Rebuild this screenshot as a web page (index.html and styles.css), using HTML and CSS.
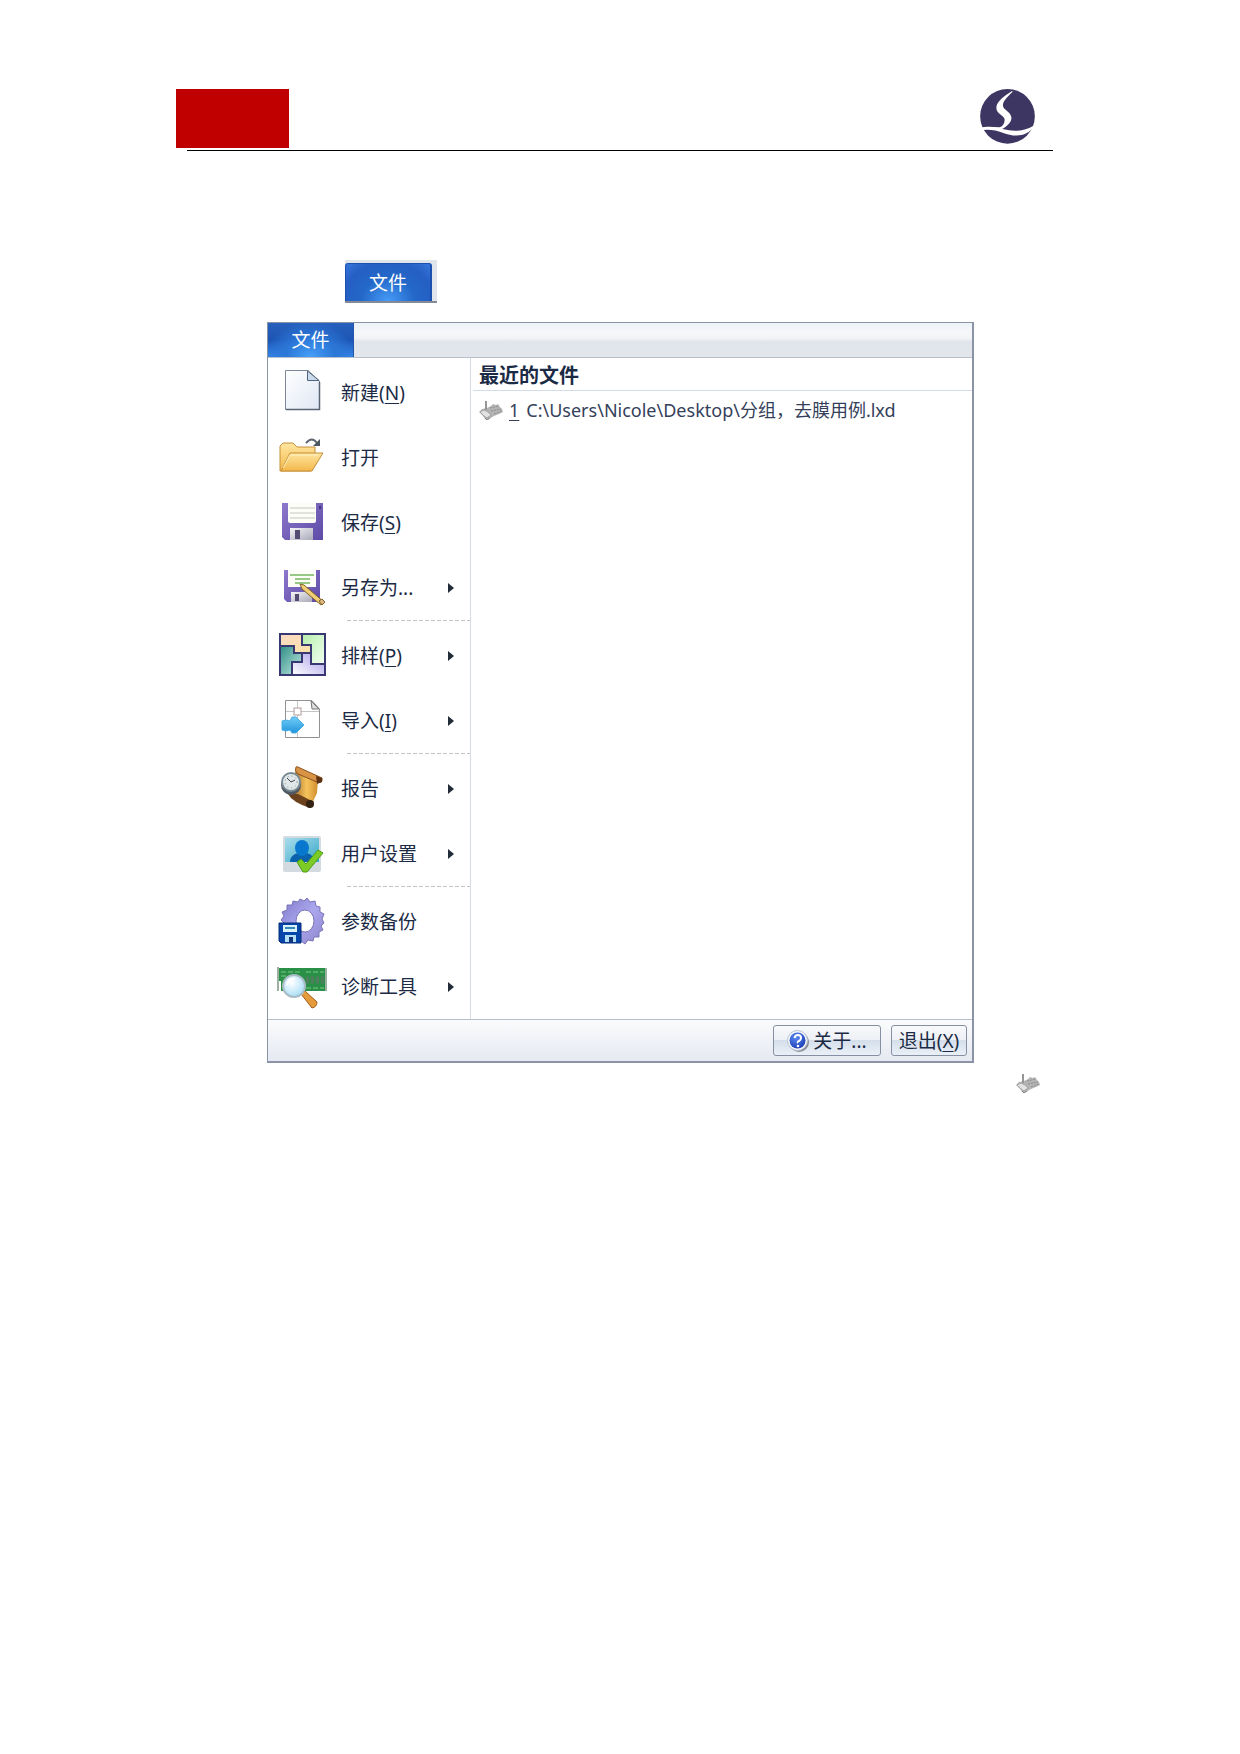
FILE: index.html
```html
<!DOCTYPE html>
<html lang="zh-CN">
<head>
<meta charset="utf-8">
<meta name="viewport" content="width=device-width, initial-scale=1">
<title>文件</title>
<link rel="stylesheet" href="styles.css">
</head>
<body>
<svg class="defs" aria-hidden="true">
  <defs>
    <linearGradient id="paper" x1="0" y1="0" x2="1" y2="1"><stop offset="0" stop-color="#fff"/><stop offset="1" stop-color="#dfe6f4"/></linearGradient>
    <linearGradient id="folder" x1="0" y1="0" x2="0" y2="1"><stop offset="0" stop-color="#ffe6a0"/><stop offset="1" stop-color="#f3b84b"/></linearGradient>
    <linearGradient id="violet" x1="0" y1="0" x2="1" y2="1"><stop offset="0" stop-color="#8d78cc"/><stop offset="1" stop-color="#5d4aa6"/></linearGradient>
    <linearGradient id="metal" x1="0" y1="0" x2="1" y2="1"><stop offset="0" stop-color="#f4f4f8"/><stop offset="1" stop-color="#a9a9b8"/></linearGradient>
    <linearGradient id="teal" x1="0" y1="0" x2="1" y2="1"><stop offset="0" stop-color="#2c8c84"/><stop offset="1" stop-color="#c4ece4"/></linearGradient>
    <linearGradient id="peach" x1="0" y1="0" x2="1" y2="1"><stop offset="0" stop-color="#fbd9c4"/><stop offset="1" stop-color="#fbe3a8"/></linearGradient>
    <linearGradient id="mint" x1="0" y1="0" x2="1" y2="1"><stop offset="0" stop-color="#b4eeac"/><stop offset="1" stop-color="#f4fff0"/></linearGradient>
    <linearGradient id="lilac" x1="0" y1="1" x2="1" y2="0"><stop offset="0" stop-color="#fff"/><stop offset="1" stop-color="#a89ce8"/></linearGradient>
    <linearGradient id="arrowblue" x1="0" y1="0" x2="0" y2="1"><stop offset="0" stop-color="#6fcdf8"/><stop offset="1" stop-color="#2394dc"/></linearGradient>
    <linearGradient id="scroll" x1="0" y1="0" x2="1" y2="0"><stop offset="0" stop-color="#94591c"/><stop offset=".6" stop-color="#f6c45c"/><stop offset="1" stop-color="#d08c2c"/></linearGradient>
    <linearGradient id="sky" x1="0" y1="0" x2="1" y2="1"><stop offset="0" stop-color="#a8dcec"/><stop offset="1" stop-color="#38a8c8"/></linearGradient>
    <linearGradient id="gear" x1="0" y1="0" x2="1" y2="1"><stop offset="0" stop-color="#7c78c8"/><stop offset=".5" stop-color="#aca8ee"/><stop offset="1" stop-color="#8c84cc"/></linearGradient>
    <radialGradient id="lens" cx=".4" cy=".35" r=".7"><stop offset="0" stop-color="#fff"/><stop offset="1" stop-color="#a4dcf6"/></radialGradient>
    <radialGradient id="help" cx=".4" cy=".3" r=".8"><stop offset="0" stop-color="#5c8cf4"/><stop offset="1" stop-color="#1838b0"/></radialGradient>
    <symbol id="part" viewBox="0 0 24 20">
      <path d="M8 8 12 6 14 4 17 5 19 4 21 7 23 9 24 12 20 14 15 16 10 19 7 20 4 16 0 12 3 9Z" fill="#b4b4b4"/>
      <path d="M1 12 5 10 9 12 12 15 8 18 5 16Z" fill="#e2e2e2" stroke="#a4a4a4"/>
      <path d="M11 8 20 6M12 11 22 9M15 14 23 11" stroke="#8e8e8e" stroke-dasharray="2 1"/>
      <path d="M7 1V10" fill="none" stroke="#959595" stroke-width="2"/>
      <path d="m6 18 2 2 3-2" fill="none" stroke="#858585"/>
    </symbol>
  </defs>
</svg>

<header class="page-header">
  <div class="red-block"></div>
  <svg class="logo" viewBox="117 57 165 163" role="img" aria-label="logo">
    <circle cx="199.500" cy="138" r="82" fill="#3d3562"/>
    <path d="M213 62C190 77 167 93 166 112C165 131 192 136 191 149C190 162 182 170 175 171C157 170 140 167 117 172V180C143 176 164 179 185 187C207 195 225 198 245 193C263 187 276 176 278 166C253 180 227 184 205 180L184 176C202 165 213 153 211 140C208 124 188 119 186 107C184 95 196 82 215 64Z" fill="#fff"/>
  </svg>
</header>

<main class="content">
  <div class="tab-sample"><button class="file-button" type="button">文件</button></div>

  <section class="app-menu">
    <div class="title-bar"><button class="tab" type="button">文件</button></div>
    <div class="panes">
      <nav class="commands">
        <button class="command" type="button">
          <svg class="icon" viewBox="0 0 48 48"><path d="M7.500 1.500H30L41.500 12V40.500H7.500Z" fill="url(#paper)" stroke="#7c8798"/><path d="M41.500 13V40.500H8" fill="none" stroke="#596475" stroke-width="1.500"/><path d="M29.500 2V11.500H41Z" fill="#c9daea" stroke="#52657c"/></svg>
          <span>新建(<u>N</u>)</span>
        </button>
        <button class="command" type="button">
          <svg class="icon" viewBox="0 0 48 48"><path d="M2 37V12l3-3H15l4 4H37V18L33 37Z" fill="url(#folder)" stroke="#c58f39"/><path d="M3 37 12 19H45L34 37Z" fill="url(#folder)" stroke="#c58f39"/><path d="M5 34 12 21H40" fill="none" stroke="#fff0bd"/><path d="M28 9Q34 2 39 9" fill="none" stroke="#5e6670" stroke-width="2"/><path d="M42 5V12H35Z" fill="#4d5761"/></svg>
          <span>打开</span>
        </button>
        <button class="command" type="button">
          <svg class="icon" viewBox="0 0 48 48"><path d="M4 4H45V41H7L4 38Z" fill="url(#violet)"/><path d="M10 4H38V22Q38 24 36 24H12Q10 24 10 22Z" fill="#fdfdf7"/><path d="M12 9H37M12 14H37M12 19H37" stroke="#c4c9bb"/><path d="M12 29H35V41H12Z" fill="url(#metal)"/><path d="M17 31H22V40H17Z" fill="#554c73"/><path d="M41 7h2v3h-2Z" fill="#44357f"/></svg>
          <span>保存(<u>S</u>)</span>
        </button>
        <button class="command" type="button">
          <svg class="icon" viewBox="0 0 48 48"><path d="M6 6H42V38H9L6 35Z" fill="url(#violet)"/><path d="M10 6H38V23H10Z" fill="#fdfdf7"/><path d="M12 11H36M17 15H32M17 19H32" stroke="#75b662" stroke-width="1.500"/><path d="M13 28H34V38H13Z" fill="url(#metal)"/><path d="M17 30H21V37H17Z" fill="#554c73"/><path d="M22 20 26 21 46 38 43 41 24 25Z" fill="#f0ce72" stroke="#81622c"/><path d="m41 37 3-2 3 3-3 3Z" fill="#dbb981" stroke="#81622c"/></svg>
          <span>另存为...</span><i class="arrow"></i>
        </button>
        <hr class="separator">
        <button class="command" type="button">
          <svg class="icon" viewBox="0 0 48 48"><path d="M2 2H24V13H33V21H14V14H2Z" fill="url(#peach)"/><path d="M24 2H47V32H33V13H24Z" fill="url(#mint)"/><path d="M2 14H16V21H24V30H14V43H2Z" fill="url(#teal)"/><path d="M24 21H33V32H47V43H14V30H24Z" fill="url(#lilac)"/><path d="M2 2H47V43H2ZM24 2V13H33V32H47M2 14H16V21H33M24 21V30H14V43" fill="none" stroke="#3a3872" stroke-width="2"/></svg>
          <span>排样(<u>P</u>)</span><i class="arrow"></i>
        </button>
        <button class="command" type="button">
          <svg class="icon" viewBox="0 0 48 48"><path d="M7.500 3.500H34L41.500 12V40.500H7.500Z" fill="#fff" stroke="#929292"/><path d="M33 4 34 12H41Z" fill="#ddd" stroke="#777"/><path d="M8 14.500H41M19.500 4V40" stroke="#c4c4c4"/><rect x="16" y="11" width="7" height="7" fill="#fff" stroke="#b09c9c"/><path d="M4 24 8 23 12 24 14 20H18L26 28 18 36H14L12 33 8 34 4 33Z" fill="url(#arrowblue)" stroke="#4aaee2"/></svg>
          <span>导入(<u>I</u>)</span><i class="arrow"></i>
        </button>
        <hr class="separator">
        <button class="command" type="button">
          <svg class="icon" viewBox="0 0 48 48"><path d="M18 4 40 14 39 28 33 41 12 29Z" fill="url(#scroll)"/><path d="M18 2Q16 6 20 9L39 17Q45 19 44 13L22 3Q19 1 18 2Z" fill="#d99345" stroke="#8b5320"/><path d="M38 11 44 13V17L39 19Z" fill="#5c3215"/><path d="M10 29Q14 37 32 43L36 37 20 29Z" fill="#6c411e"/><circle cx="32" cy="39" r="4" fill="#322213"/><circle cx="13" cy="20" r="10" fill="#505961"/><circle cx="13" cy="17" r="9" fill="#e1e8e9" stroke="#798994" stroke-width="2"/><path d="m9 13 4 4 4-2" fill="none" stroke="#444"/><circle cx="13" cy="17" r="6" fill="none" stroke="#7d898e" stroke-dasharray="1 3"/></svg>
          <span>报告</span><i class="arrow"></i>
        </button>
        <button class="command" type="button">
          <svg class="icon" viewBox="0 0 48 48"><rect x="5" y="6" width="38" height="36" rx="2" fill="#d3dbe0"/><path d="M7 8H41V32H7Z" fill="url(#sky)"/><path d="M12 32Q12 25 20 23H29Q36 25 36 32Z" fill="#0b62ac"/><ellipse cx="24" cy="18" rx="7" ry="8" fill="#0878ce"/><path d="m19 32 4-3 5 5L40 20 45 23 29 42H25Z" fill="#7dcc25" stroke="#4c9d18"/></svg>
          <span>用户设置</span><i class="arrow"></i>
        </button>
        <hr class="separator">
        <button class="command" type="button">
          <svg class="icon" viewBox="0 0 48 48"><path fill-rule="evenodd" d="M20 4 22 1 26 3 29 0 32 4 37 3 38 8 42 9 42 14 46 16 44 21 46 25 43 28 45 32 41 34 41 39 36 39 35 43 30 42 27 46 23 43 18 44 16 39 11 38 10 33 5 31 7 26 3 22 6 18 4 14 9 12 9 7 14 7 15 3ZM27 12A9 11 0 1 0 27 34 9 11 0 1 0 27 12Z" fill="url(#gear)" stroke="#7a74b8"/><path d="M1 25H23V45H3L1 43Z" fill="#0645aa" stroke="#062d76"/><path d="M5 27H19V34H5Z" fill="#d9f2fa"/><path d="M7 30H17" stroke="#3489ba" stroke-width="2"/><path d="M7 37H18V44H7Z" fill="#b3dff4"/><path d="M11 39h4v5h-4Z" fill="#123377"/></svg>
          <span>参数备份</span>
        </button>
        <button class="command" type="button">
          <svg class="icon" viewBox="0 0 48 48"><path d="M-1 5H49V28H3V18H-1Z" fill="#2a9048"/><path d="M0 4V28M48 5V28" stroke="#9bb0a1" stroke-width="2"/><path d="M3 9H24M28 9H46M3 13H14M28 25H46" stroke="#79c883" stroke-dasharray="5 2"/><path d="M28 17H46" stroke="#4f7f5c" stroke-width="7" stroke-dasharray="3 2"/><path d="m23 31 4-3L39 39Q39 44 34 45Z" fill="#e59a3b" stroke="#a45d1e"/><circle cx="16" cy="23" r="11" fill="url(#lens)" stroke="#a9bcc6" stroke-width="2"/><path d="M9 22Q11 15 17 16" fill="none" stroke="#fff" stroke-width="2"/></svg>
          <span>诊断工具</span><i class="arrow"></i>
        </button>
      </nav>
      <section class="recent">
        <h2 class="recent-title">最近的文件</h2>
        <a class="recent-file" href="#"><svg class="part-icon"><use href="#part"/></svg><u>1</u><span>C:\Users\Nicole\Desktop\分组，去膜用例.lxd</span></a>
      </section>
    </div>
    <footer class="actions">
      <button class="action about" type="button"><svg class="help-icon" viewBox="0 0 22 22"><circle cx="12" cy="12" r="10" fill="#858b94"/><circle cx="10.500" cy="10.500" r="10" fill="#f4f6fa" stroke="#b8c4d4"/><circle cx="10.500" cy="10.500" r="8" fill="url(#help)"/><path d="M7.500 8Q8 5 11 5T14 8Q14 10 12 11T11 13" fill="none" stroke="#fff" stroke-width="2"/><circle cx="11" cy="16" r="1.300" fill="#fff"/></svg>关于...</button>
      <button class="action" type="button">退出(<u>X</u>)</button>
    </footer>
  </section>
</main>
<div class="note"><svg class="part-icon"><use href="#part"/></svg></div>
</body>
</html>
```
FILE: styles.css
```css
* {
  box-sizing: border-box;
}

body {
  margin: 0;
  background: #fff;
  color: #1c2b45;
  font: 19px/24px "Noto Sans", "Noto Sans CJK SC", sans-serif;
}

button {
  margin: 0;
  padding: 0;
  border: 0;
  background: none;
  color: inherit;
  font: inherit;
}

u {
  text-decoration-thickness: 1px;
  text-underline-offset: 3px;
}

.defs {
  position: absolute;
  width: 0;
  height: 0;
}

.page-header {
  display: flex;
  justify-content: space-between;
  margin: 89px 187px 0;
  padding-right: 18px;
  border-bottom: 1px solid #000;
}

.red-block {
  width: 113px;
  height: 59px;
  margin: 0 0 2px -11px;
  background: #c00000;
}

.logo {
  width: 55px;
  height: 55px;
}

.content {
  margin: 109px 266px 0 267px;
}

.tab-sample {
  width: 92px;
  margin-left: 78px;
  padding: 3px 5px 0 0;
  border-bottom: 2px solid #858b94;
  background: #dfe5eb;
}

.file-button,
.tab {
  display: block;
  width: 87px;
  color: #fff;
}

.file-button {
  height: 38px;
  border: 1px solid #1c50ae;
  border-width: 1px 2px 0 1px;
  border-radius: 3px 3px 0 0;
  background: radial-gradient(ellipse at bottom, #479bf8 0, #2368c8 45%, #255fc4 75%, #3676dc 100%);
}

.app-menu {
  margin-top: 19px;
  border: 1px solid #8b94a7;
  border-right-width: 2px;
  border-bottom-width: 2px;
  background: #fff;
}

.title-bar {
  border-bottom: 1px solid #b7bfca;
  background: linear-gradient(#edf3fa 0, #f6f7f8 30%, #f1f3f5 45%, #e0e5ec 55%, #e3e7ec 100%);
}

.tab {
  width: 86px;
  height: 34px;
  border-right: 1px solid #2455a8;
  background: radial-gradient(ellipse at bottom, #46a0f8 0, #2c78d8 40%, transparent 75%), linear-gradient(#2860bc, #1c55b4 50%, #3486e8);
}

.panes {
  display: grid;
  grid-template-columns: 203px 1fr;
}

.commands {
  padding-top: 2px;
  border-right: 1px solid #d7dce4;
}

.command {
  display: flex;
  align-items: center;
  width: 100%;
  height: 65px;
  padding: 0 16px 0 10px;
  text-align: left;
  white-space: nowrap;
}

.icon {
  flex: none;
  width: 48px;
  height: 48px;
  margin-right: 15px;
  overflow: visible;
}

.arrow {
  margin-left: auto;
  border: solid transparent;
  border-width: 5px 0 5px 6px;
  border-left-color: #222b38;
}

.separator {
  height: 3px;
  margin: 0 0 0 79px;
  border: 0;
  background: repeating-linear-gradient(90deg, #c3c3c7 0 4px, transparent 4px 6px) 0 0 / 100% 1px no-repeat;
}

.recent {
  padding-left: 2px;
}

.recent-title {
  margin: 0;
  padding: 6px 6px 2px;
  border-bottom: 1px solid #d3dbe6;
  font-size: 20px;
  font-weight: 700;
}

.recent-file {
  display: flex;
  align-items: center;
  height: 38px;
  padding-left: 6px;
  color: #34405a;
  font-size: 18px;
  text-decoration: none;
  white-space: nowrap;
}

.recent-file u {
  margin: 0 7px 0 6px;
}

.part-icon {
  width: 24px;
  height: 20px;
}

.actions {
  display: flex;
  justify-content: flex-end;
  gap: 10px;
  padding: 5px 5px 5px 0;
  border-top: 1px solid #b7bfca;
  background: linear-gradient(#fafbfc, #e5e9f1);
}

.action {
  display: flex;
  align-items: center;
  justify-content: center;
  width: 76px;
  height: 31px;
  border: 1px solid #8790a2;
  border-radius: 3px;
  background: linear-gradient(#f8f9fb 0, #edf0f5 48%, #d5dfeb 50%, #eaf0f7 100%);
}

.about {
  gap: 4px;
  width: 108px;
}

.help-icon {
  width: 22px;
  height: 22px;
}

.note {
  display: flex;
  justify-content: flex-end;
  margin: 10px 200px 40px;
}

@media (max-width: 1000px) {
  .page-header,
  .content,
  .note {
    margin-left: 24px;
    margin-right: 24px;
  }
}
```
